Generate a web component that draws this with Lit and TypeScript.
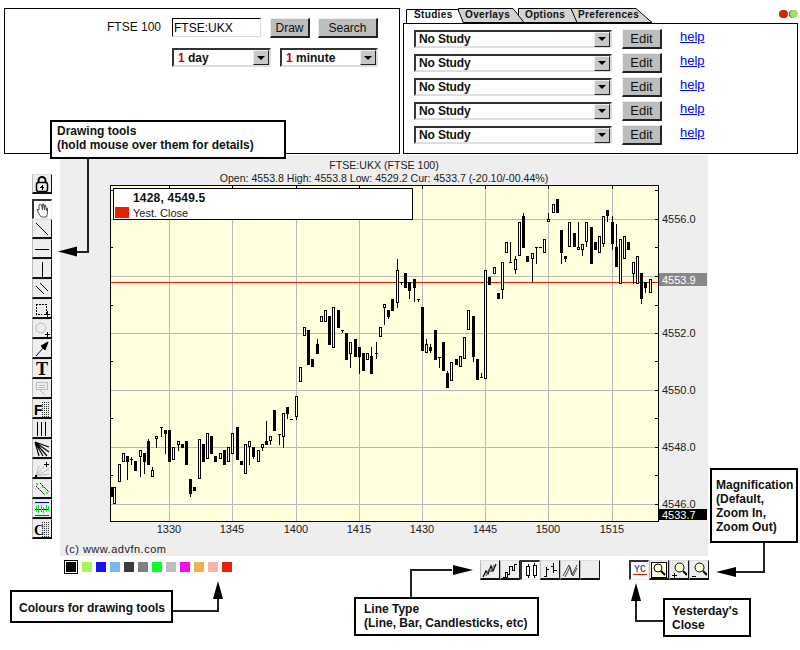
import { LitElement, html, css, svg } from "lit";
import { customElement } from "lit/decorators.js";

type C = [number, number, number, number, number?, number?];
// [zoomX, bodyTop, bodyBottom, kind 1 filled / 0 hollow / 2 tick-only, wickTop, wickBottom]
const SET_A: C[] = [
  [3,440,470,1],[13,442,493,0],[28,373,425,0],[40,340,365,0],[52,349,365,1,349,420],[64,358,359,2,350,375],[76,363,392,1],
  [91,331,350,0,331,410],[103,340,365,1,340,402],[115,304,374,1,297,374],[127,391,410,0,382,410],[139,289,298,0,289,324],
  [154,262,263,2,262,290],[166,271,283,1,271,342],[178,271,365,1],[190,322,359,0],[205,304,314,0,304,332],[217,313,323,1],
  [229,304,374,1],[241,418,461,1,418,470],[253,442,452,1],[268,298,418,0],[280,313,365,1],[292,280,358,0],[304,289,341,1],
  [316,349,365,1],[331,340,358,0],[343,331,374,1],[355,322,365,0],[367,280,341,0],[382,262,359,1],[394,364,374,1],
  [406,313,401,0],[418,304,322,0,304,374],[430,322,350,1,322,358],[445,331,365,0],[457,313,323,0,313,332],[469,304,314,1,243,314],
  [481,289,304,0,289,314],[493,211,272,1],[508,281,282,2,281,314],[520,220,290,0,220,323],[532,202,221,1,202,238],[544,238,239,2],
  [559,169,230,0,169,240],[571,82,125,0],
];
const SET_B: C[] = [
  [28,82,109,0],[40,91,194,1],[52,178,202,1],[67,133,161,1,118,161],[79,49,67,0],[91,31,67,0],[103,49,134,1],[115,22,143,0],
  [130,31,83,1],[142,91,92,2,91,100],[154,100,179,1],[166,127,161,0,127,205],[181,118,170,1],[193,142,170,1,142,222],
  [205,160,213,1],[217,160,179,0],[229,169,222,1,142,222],[244,160,161,2,127,178],
];
const SET_C: C[] = [
  [0,442,470,0],[14,373,383,0,373,434],[26,391,411,1,391,418],[38,358,392,1],[52,271,368,0,238,383],[64,307,308,2,307,315],
  [76,280,323,1],[88,307,332,1,307,358],[103,298,323,1,298,367],[115,358,359,2,358,367],[127,382,512,1],[139,493,520,0,478,520],
  [151,502,512,1,493,520],[166,451,539,1],[178,530,531,2,530,564],[190,487,572,1],[202,580,623,1,572,623],[214,545,604,0],
  [229,538,554,1],[241,529,562,0],[253,470,538,0],[265,391,451,0],[280,409,530,1,409,545],[292,538,599,1],[304,591,592,2,578,592],
  [316,271,598,0],[328,290,314,1],[343,262,281,0],[355,340,358,1],[367,247,331,0,247,358],[379,187,220,0],[391,247,248,2,187,247],
  [406,238,271,0,229,281],[418,127,229,0],[430,109,203,1,100,203],[442,229,247,1],[457,220,238,0,220,307],[469,202,203,2,202,253],
  [481,202,203,2],[493,178,220,0],[505,118,127,0,100,127],[520,73,100,0],[532,58,100,1],[545,151,220,1,151,253],[557,229,238,1,229,247],
  [568,127,202,0],[583,160,202,1],[595,202,211,0,127,211],[607,193,211,0,193,229],[619,127,187,0,127,202],[634,142,253,1],
  [646,187,211,1],[658,169,220,0],[670,109,193,0,109,202],[682,91,109,1,91,127],[697,127,193,1,109,211],[709,202,262,1,133,262],
  [721,178,313,0],[733,169,238,0],[745,187,211,1],[760,247,281,0,247,313],[772,229,313,0],[784,280,358,1,280,373],[796,307,323,1,307,340],[811,298,340,0],
];

const OX = 60, OY = 155; // chart canvas origin on the page
const YELLOW = "#ffffdc";

function candles(set: C[], bx: number, by: number) {
  return set.map(([z, t, b, kind, wt, wb]) => {
    const cx = Math.floor(bx + z / 3) - OX;
    const T = Math.round(by + t / 3) - OY, B = Math.round(by + b / 3) - OY;
    const parts = [];
    if (wt !== undefined && wb !== undefined) {
      const a = Math.round(by + wt / 3) - OY, c = Math.round(by + wb / 3) - OY;
      parts.push(svg`<rect x=${cx} y=${a} width="1" height=${c - a} fill="#000"/>`);
    }
    if (kind === 1) parts.push(svg`<rect x=${cx - 1} y=${T} width="3" height=${B - T} fill="#000"/>`);
    else if (kind === 0)
      parts.push(svg`<rect x=${cx - 0.5} y=${T + 0.5} width="2" height=${Math.max(B - T - 1, 1)} fill=${YELLOW} stroke="#000"/>`);
    else parts.push(svg`<rect x=${cx - 1} y=${T} width="3" height="1" fill="#000"/>`);
    return parts;
  });
}

const S = (body: unknown) => html`<svg width="16" height="16" viewBox="0 0 16 16" fill="none" stroke="#000" shape-rendering="crispEdges">${body}</svg>`;
const DOTS = svg`<path d="M8 1H16M8 3H16M8 5H16M8 7H16M8 9H16M8 11H16M8 13H16M8 15H16" stroke="#333" stroke-dasharray="1 1"/>`;

const TOOL_ICONS = [
  svg`<g shape-rendering="auto"><path d="M4.500 7V4.500a3.500 3.500 0 0 1 7 0V7" stroke-width="2"/><rect x="2.500" y="6.500" width="11" height="9" rx="2" fill="#eee" stroke-width="1.500"/></g><path d="M8 9V14M6 11H10M7 10H9" stroke-width="1"/>`,
  svg`<path d="M6 15 3 10l-1-3 2 1V3l1.500-1 1 1 1 5V2l1 0 1 6V3l1 0 1 6V6l1 0 0 5-1 4z" fill="#fff" stroke="#555" shape-rendering="auto"/>`,
  svg`<path d="M2 2 14 14" shape-rendering="auto"/>`,
  svg`<path d="M1 8.500H15"/>`,
  svg`<path d="M8.500 1V16"/>`,
  svg`<path d="M2 5 10 13M6 2 14 10" shape-rendering="auto"/>`,
  svg`<path d="M2 3H12V13M2 3V13H8" stroke-dasharray="2 1"/><path d="M13 10V16M10 13H16"/>`,
  svg`<circle cx="7" cy="7" r="5" stroke="#bbb" shape-rendering="auto"/><path d="M13 11V16M10.500 13.500H15.500"/>`,
  svg`<path d="M2 15 10 6" shape-rendering="auto"/><path d="M14 1 7 5l4 4z" fill="#000" shape-rendering="auto"/>`,
  svg`<text class="gt" x="8" y="14" text-anchor="middle">T</text>`,
  svg`<rect x="2.500" y="1.500" width="11" height="7" stroke="#bbb"/><path d="M5 4H11M5 6H11" stroke="#bbb"/><path d="M5 8 11 14" stroke="#bbb" shape-rendering="auto"/>`,
  svg`<text class="gf" x="0" y="14">F</text>${DOTS}`,
  svg`<path d="M3.500 1V15M7.500 1V15M11.500 1V15" stroke-width="1"/>`,
  svg`<g shape-rendering="auto"><path d="M1 1 15 6M1 1 15 11M1 1 9 15M1 1 5 15M1 1 13 15" stroke-width="1.200"/></g>`,
  svg`<g shape-rendering="auto" stroke="#bbb"><path d="M2 15 10 5M2 15 15 8M2 15 15 13M2 15 5 5" /></g><rect x="1" y="14" width="2" height="2" fill="#000" stroke="none"/><path d="M12 1V6M10 3.500H15"/>`,
  svg`<g shape-rendering="auto"><path d="M2 5 11 14M6 2 15 11" stroke-dasharray="2 1"/></g><rect x="2" y="2" width="2" height="2" fill="#4e4" stroke="none"/><rect x="8" y="5" width="2" height="2" fill="#4e4" stroke="none"/><rect x="12" y="11" width="2" height="2" fill="#4e4" stroke="none"/>`,
  svg`<path d="M1 1.500H15" stroke="#00c"/><path d="M1 14.500H15" stroke="#e00"/><path d="M1 8.500H15" stroke="#000"/><path d="M2 5V11M4 4V12M7 4V11M9 6V12M12 4V11M14 5V10" stroke="#0d2" stroke-width="1"/>`,
  svg`<text class="gc" x="0" y="14">C</text>${DOTS}`,
];

const LINE_ICONS = [
  svg`<path d="M1 15 4 9 6 12 9 4 11 9 14 2" shape-rendering="auto" stroke-width="1.200"/><path d="M4 14 7 7 9 10 12 3" stroke="#555" shape-rendering="auto"/>`,
  svg`<path d="M1 15H3V10H5V12H7V4H10V8H12V2H15"/><path d="M4 15H5V12"/>`,
  svg`<rect x="3.500" y="3.500" width="3" height="9"/><path d="M5 1V3M5 13V15"/><rect x="10" y="2" width="3" height="10" fill="#fff"/><path d="M11.500 0V2M11.500 12V15"/>`,
  svg`<path d="M4.500 5V15M2 14H4M4 7H7M11.500 1V11M9 4H11M12 8H15"/>`,
  svg`<path d="M1 14 7 3 10 13 15 3M3 15 8 5 11 14 15 6" stroke="#444" shape-rendering="auto"/>`,
  svg``,
];

const ZOOM_ICONS = [
  svg`<text x="8" y="9" text-anchor="middle" class="yc">YC</text><path d="M1 11.500H15" stroke="#f01000"/>`,
  svg`<rect x="0.500" y="0.500" width="15" height="15" fill="#ffffdc"/><circle cx="7" cy="6" r="4" fill="#ffffdc" shape-rendering="auto"/><path d="M10 9 14 13" stroke-width="2" shape-rendering="auto"/>`,
  svg`<circle cx="8.500" cy="5.500" r="4.500" fill="#ffffdc" shape-rendering="auto"/><path d="M12 9 16 13" stroke-width="2" shape-rendering="auto"/><path d="M3 11V16M0.500 13.500H5.500"/>`,
  svg`<circle cx="8.500" cy="5.500" r="4.500" fill="#ffffdc" shape-rendering="auto"/><path d="M12 9 16 13" stroke-width="2" shape-rendering="auto"/><path d="M1 14.500H5"/>`,
];

const COLOURS = ["#a6f55a", "#1e0ffa", "#78b8f0", "#3c3c3c", "#808080", "#0aff2a", "#bebebe", "#fa0af0", "#ebb250", "#ffb4aa", "#eb2000"];

const V_GRID = [169, 232, 296, 359, 422, 485, 548, 612];
const H_GRID = [219, 276, 333, 390, 447, 504];
const TIMES: [number, string][] = [[169, "1330"], [232, "1345"], [296, "1400"], [359, "1415"], [422, "1430"], [485, "1445"], [548, "1500"], [612, "1515"]];
const PRICES: [number, string][] = [[219, "4556.0"], [333, "4552.0"], [390, "4550.0"], [447, "4548.0"], [504, "4546.0"]];

@customElement("app-root")
export class AppRoot extends LitElement {
  static styles = css`
    :host { display: block; position: relative; width: 800px; height: 650px; overflow: hidden; background: #fff;
      font-family: "Liberation Sans", Arial, sans-serif; color: #000; }
    .top { display: flex; height: 155px; box-sizing: border-box; padding-top: 8px; }
    .panel-left { box-sizing: border-box; width: 396px; height: 146px; margin-left: 4px; border: 1px solid #000;
      display: flex; flex-direction: column; gap: 10px; padding: 9px 0 0 102px; }
    .row { display: flex; align-items: flex-start; }
    .sym { width: 65px; font-size: 12px; line-height: 18px; color: #111; }
    .input { box-sizing: border-box; width: 89px; height: 19px; border: 1px solid #ddd; border-top: 1px solid #000; border-left: 1px solid #000;
      font-size: 12px; line-height: 19px; padding-left: 1px; }
    button { font-family: inherit; padding: 0; box-sizing: border-box; background: #bdbdbd; color: #111; font-size: 12px;
      border: 2px solid; border-color: #eee #222 #222 #eee; cursor: default; }
    .draw { width: 40px; height: 20px; margin-left: 9px; border-width: 1px 2px 2px 1px; }
    .search { width: 60px; height: 20px; margin-left: 8px; border-width: 1px 2px 2px 1px; }
    .sel { box-sizing: border-box; display: flex; justify-content: space-between; align-items: center; height: 19px; background: #fff;
      border: 2px solid; border-color: #333 #ddd #ddd #333; font-weight: bold; font-size: 12px; padding-left: 3px; color: #111; }
    .sel-arrow { box-sizing: border-box; width: 16px; height: 15px; background: #c8c8c8; border: 1px solid; border-color: #eee #222 #222 #eee;
      display: flex; align-items: center; justify-content: center; }
    .sel-arrow::after { content: ""; border: 4px solid transparent; border-top: 4px solid #000; border-bottom: 0; }
    .s1 { width: 99px; margin-left: 65px; padding-left: 4px; }
    .s2 { width: 98px; margin-left: 9px; padding-left: 4px; }
    .one { color: #c00; }
    .panel-right { position: relative; width: 395px; margin-left: 3px; display: flex; flex-direction: column; }
    .tabs { display: block; height: 15px; }
    .tab-text { font: bold 10px "Liberation Sans", Arial, sans-serif; letter-spacing: 0.35px; fill: #111; }
    .lights { display: flex; gap: 2px; position: absolute; top: 2px; right: 0; }
    .light { width: 8px; height: 8px; border-radius: 50%; box-shadow: -1px 0 0 #555; }
    .studies { box-sizing: border-box; height: 131px; border: 1px solid #000; display: flex; flex-direction: column; gap: 5px; padding: 5px 0 0 10px; }
    .study { display: flex; align-items: flex-start; height: 19px; }
    .study .sel { width: 198px; height: 18px; margin-top: 1px; letter-spacing: -0.15px; }
    .edit { width: 40px; height: 20px; margin-left: 10px; font-size: 13px; border-width: 1px 2px 2px 1px; }
    a { margin-left: 18px; color: #00f; font-size: 13px; line-height: 15px; text-decoration: underline; }
    .middle { display: flex; height: 401px; }
    .tools { width: 20px; margin: 19px 8px 0 32px; display: flex; flex-direction: column; }
    .lock { margin-bottom: 5px; }
    .tb { box-sizing: border-box; width: 20px; height: 20px; flex: none; background: #eee; border: 1px solid; border-color: #ddd #111 #111 #bbb;
      border-width: 1px 1px 2px 1px; display: flex; align-items: center; justify-content: center; overflow: hidden; }
    .tb.on { background: #fff; border-color: #333 #eee #eee #333; border-width: 2px 1px 1px 2px; }
    .chart { display: block; }
    .lbl { font: 11px "Liberation Sans", Arial, sans-serif; fill: #222; }
    .lblw { font: 11px "Liberation Sans", Arial, sans-serif; fill: #fff; }
    .head { font: 10.6px "Liberation Sans", Arial, sans-serif; fill: #222; }
    .bold { font: bold 12px "Liberation Sans", Arial, sans-serif; letter-spacing: 0.2px; fill: #111; }
    .yest { font: 11px "Liberation Sans", Arial, sans-serif; fill: #222; }
    .copy { font: 11px "Liberation Sans", Arial, sans-serif; fill: #222; letter-spacing: 0.5px; }
    .bottom { display: flex; align-items: flex-start; padding-top: 4px; }
    .colours { display: flex; align-items: center; gap: 4px; width: 416px; margin-left: 64px; height: 14px; }
    .swatch { width: 10px; height: 10px; }
    .swatch.on { box-sizing: border-box; width: 14px; height: 14px; padding: 1px; border: 1px solid #000; background: #000 content-box; }
    .bar { display: flex; }
    .bar2 { margin-left: 29px; }
    .callout { position: absolute; box-sizing: border-box; background: #fff; border: 2px solid #000; font-size: 12px; font-weight: bold; line-height: 14px; color: #111; }
    .c-draw { left: 50px; top: 120px; width: 236px; height: 39px; padding: 2px 0 0 5px; }
    .c-colour { left: 10px; top: 590px; width: 163px; height: 33px; padding: 9px 0 0 7px; }
    .c-line { left: 354px; top: 597px; width: 185px; height: 39px; padding: 3px 0 0 8px; }
    .c-mag { left: 710px; top: 468px; width: 88px; height: 75px; padding: 8px 0 0 4px; }
    .c-yest { left: 663px; top: 598px; width: 88px; height: 39px; padding: 4px 0 0 7px; }
    .arrows { position: absolute; left: 0; top: 0; pointer-events: none; }
    .yc { font: 10px "Liberation Mono", monospace; fill: #222; stroke: none; }
    .gt { font: bold 18px "Liberation Serif", serif; fill: #000; stroke: none; }
    .gf { font: bold 14px "Liberation Sans", sans-serif; fill: #000; stroke: none; }
    .gc { font: bold 14px "Liberation Serif", serif; fill: #000; stroke: none; }
  `;

  private select(label: unknown, cls: string) {
    return html`<div class="sel ${cls}"><span>${label}</span><span class="sel-arrow"></span></div>`;
  }

  private chart() {
    const L = 50, T = 30, W = 548, H = 336; // plot box inside the grey canvas
    const halfTicks = [190, 247, 305, 361, 418, 475];
    return svg`
      <svg class="chart" width="648" height="401" viewBox="0 0 648 401">
        <rect width="648" height="401" fill="#eeeeee"/>
        <text class="head" x="324" y="14" text-anchor="middle">FTSE:UKX (FTSE 100)</text>
        <text class="head" x="324" y="27" text-anchor="middle">Open: 4553.8 High: 4553.8 Low: 4529.2 Cur: 4533.7 (-20.10/-00.44%)</text>
        <rect x=${L + 0.5} y=${T + 0.5} width=${W} height=${H} fill=${YELLOW} stroke="#000" shape-rendering="crispEdges"/>
        <g shape-rendering="crispEdges">
          ${V_GRID.map(x => svg`<rect x=${x - OX} y=${T + 1} width="1" height=${H - 1} fill="#b8b8b8"/>`)}
          ${H_GRID.map(y => svg`<rect x=${L + 1} y=${y - OY} width=${W - 1} height="1" fill="#b8b8b8"/>`)}
          <rect x=${L + 1} y=${282 - OY} width=${W - 1} height="1" fill="#eb2000"/>
          ${H_GRID.map(y => svg`<rect x=${L + W - 3} y=${y - OY} width="3" height="1" fill="#000"/>`)}
          ${halfTicks.map(y => svg`<rect x=${L + W - 3} y=${y - OY} width="3" height="1" fill="#000"/>`)}
          ${halfTicks.map(y => svg`<rect x=${L + 1} y=${y - OY} width="2" height="1" fill="#000"/>`)}
          ${V_GRID.map(x => svg`<rect x=${x - OX} y=${T + 1} width="1" height="3" fill="#000"/>`)}
          ${candles(SET_A, 110, 340)}
          ${candles(SET_B, 295, 300)}
          ${candles(SET_C, 380, 180)}
          <rect x=${53.5} y=${33.5} width="299" height="31" fill="#fff" stroke="#000"/>
          <rect x="55" y="52" width="14" height="11" fill="#eb2000"/>
          <rect x="599" y=${273 - OY} width="48" height="13" fill="#888"/>
          <rect x="599" y=${509 - OY} width="48" height="11" fill="#000"/>
        </g>
        <text class="bold" x="73" y="47">1428, 4549.5</text>
        <text class="yest" x="73" y="62">Yest. Close</text>
        ${PRICES.map(([y, t]) => svg`<text class="lbl" x="602" y=${y - OY + 4}>${t}</text>`)}
        <text class="lblw" x="602" y=${284 - OY}>4553.9</text>
        <text class="lblw" x="602" y=${519 - OY}>4533.7</text>
        ${TIMES.map(([x, t]) => svg`<text class="lbl" x=${x - OX} y=${533 - OY} text-anchor="middle">${t}</text>`)}
        <text class="copy" x="5" y=${553 - OY}>(c) www.advfn.com</text>
      </svg>`;
  }

  render() {
    return html`
      <div class="top">
        <div class="panel-left">
          <div class="row">
            <span class="sym">FTSE 100</span>
            <div class="input">FTSE:UKX</div>
            <button class="draw">Draw</button>
            <button class="search">Search</button>
          </div>
          <div class="row">
            ${this.select(html`<span class="one">1</span> day`, "s1")}
            ${this.select(html`<span class="one">1</span> minute`, "s2")}
          </div>
        </div>
        <div class="panel-right">
          <svg class="tabs" width="395" height="15" viewBox="403 8 395 15">
            <g fill="#d4d4d4" stroke="#000" shape-rendering="geometricPrecision">
              <path d="M571.500 22.500 V8.500 H636 L652 22.500Z"/>
              <path d="M518.500 22.500 V8.500 H571 L577 22.500Z"/>
              <path d="M458.500 22.500 V8.500 H513 L524 22.500Z"/>
              <path d="M406.500 23 V9.500 H458 L463.500 23" fill="#fff"/>
            </g>
            <text class="tab-text" x="414" y="18">Studies</text>
            <text class="tab-text" x="465" y="18">Overlays</text>
            <text class="tab-text" x="525" y="18">Options</text>
            <text class="tab-text" x="578" y="18">Preferences</text>
          </svg>
          <div class="lights">
            <span class="light" style="background:#e02000"></span>
            <span class="light" style="background:#a6e060"></span>
          </div>
          <div class="studies">
            ${[0, 1, 2, 3, 4].map(() => html`
              <div class="study">
                ${this.select("No Study", "")}
                <button class="edit">Edit</button>
                <a href="#">help</a>
              </div>`)}
          </div>
        </div>
      </div>
      <div class="middle">
        <div class="tools">
          ${TOOL_ICONS.map((ic, i) => html`<div class="tb ${i === 0 ? "lock" : ""} ${i === 1 ? "on" : ""}">${S(ic)}</div>`)}
        </div>
        ${this.chart()}
      </div>
      <div class="bottom">
        <div class="colours">
          <div class="swatch on"></div>
          ${COLOURS.map(c => html`<div class="swatch" style="background:${c}"></div>`)}
        </div>
        <div class="bar">${LINE_ICONS.map((ic, i) => html`<div class="tb ${i === 2 ? "on" : ""}">${S(ic)}</div>`)}</div>
        <div class="bar bar2">${ZOOM_ICONS.map((ic, i) => html`<div class="tb ${i === 0 ? "on" : ""}">${S(ic)}</div>`)}</div>
      </div>

      <svg class="arrows" width="800" height="650" fill="none" stroke="#222" stroke-width="2">
        <path d="M88 158V252H76"/><path d="M58 251.500 77 246.500V256.500Z" fill="#000" stroke="none"/>
        <path d="M172 611H218V598"/><path d="M218 581 213 599H223Z" fill="#000" stroke="none"/>
        <path d="M411 598V570H452"/><path d="M473 570 453 565V575Z" fill="#000" stroke="none"/>
        <path d="M764 542V572H735"/><path d="M716 572 736 567V577Z" fill="#000" stroke="none"/>
        <path d="M664 621H636V600"/><path d="M636 583 631 601H641Z" fill="#000" stroke="none"/>
      </svg>
      <div class="callout c-draw">Drawing tools<br>(hold mouse over them for details)</div>
      <div class="callout c-colour">Colours for drawing tools</div>
      <div class="callout c-line">Line Type<br>(Line, Bar, Candlesticks, etc)</div>
      <div class="callout c-mag">Magnification<br>(Default,<br>Zoom In,<br>Zoom Out)</div>
      <div class="callout c-yest">Yesterday's<br>Close</div>
    `;
  }
}
